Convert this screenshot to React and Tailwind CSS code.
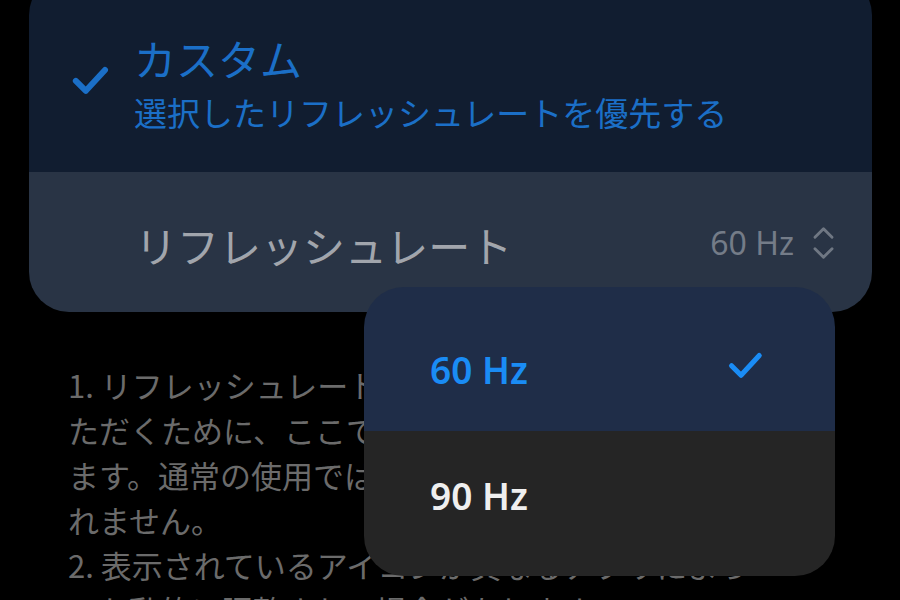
import React from "react";

const jp = { fontFamily: '"Noto Sans CJK JP", "Noto Sans", sans-serif' };
const latin = { fontFamily: '"Noto Sans", "Noto Sans CJK JP", sans-serif' };

function Check({ className, w = 3.2 }) {
  return (
    <svg viewBox="0 0 24 24" className={className} fill="none" stroke="currentColor" strokeWidth={w} strokeLinecap="round" strokeLinejoin="round">
      <path d="M3.5 12.5 L9.5 18.5 L21 6" />
    </svg>
  );
}

export default function App() {
  return (
    <div className="relative w-[900px] h-[600px] overflow-hidden bg-black" style={jp}>
      <div className="ml-[29px] mt-[-25px] w-[843px] rounded-[40px] overflow-hidden">
        <div className="bg-[#111d30] pt-[61px] pb-[38px] pl-[41px] flex items-start">
          <Check className="w-[40px] h-[40px] mt-[24px] text-[#1b6fc7]" w={3.6} />
          <div className="ml-[24px] flex flex-col gap-[10px]">
            <div className="text-[42px] leading-[44px] text-[#1b6fc7]">カスタム</div>
            <div className="text-[33px] leading-[44px] text-[#1b6fc7] whitespace-nowrap">選択したリフレッシュレートを優先する</div>
          </div>
        </div>
        <div className="bg-[#293445] h-[140px] pl-[106px] pr-[37px] flex items-center">
          <div className="text-[42px] leading-none text-[#a1a5ac] mt-[6px]">リフレッシュレート</div>
          <div className="ml-auto flex items-center gap-[18px] mt-[2px]">
            <span className="text-[32px] leading-none text-[#747c88]" style={latin}>60 Hz</span>
            <svg viewBox="0 0 24 40" className="w-[23px] h-[38px] text-[#6f7783]" fill="none" stroke="currentColor" strokeWidth="3" strokeLinecap="round" strokeLinejoin="round">
              <path d="M3 14 L12 5 L21 14" />
              <path d="M3 26 L12 35 L21 26" />
            </svg>
          </div>
        </div>
      </div>

      <div className="ml-[68px] mt-[50px] text-[31px] leading-[45px] text-[#6b6b6b] whitespace-nowrap">
        <div>1. リフレッシュレートの違いを体験してい</div>
        <div>ただくために、ここで手動で設定を変更でき</div>
        <div>ます。通常の使用では、この設定は必要ないかも</div>
        <div>れません。</div>
        <div>2. 表示されているアイコンが異なるアプリによっ</div>
        <div>ても動的に調整されて場合があります。</div>
      </div>

      <div className="absolute left-[364px] top-[287px] w-[471px] h-[289px] rounded-[40px] overflow-hidden flex flex-col">
        <div className="h-[144px] bg-[#1f2d48] pl-[66px] pr-[71px] flex items-center pt-[20px]">
          <span className="text-[37px] leading-none font-semibold text-[#1a8cf5]" style={latin}>60 Hz</span>
          <Check className="ml-auto w-[38px] h-[38px] text-[#1a8cf5] mb-[8px]" />
        </div>
        <div className="flex-1 bg-[#252525] pl-[66px] flex items-center pb-[16px]">
          <span className="text-[37px] leading-none font-semibold text-[#efefef]" style={latin}>90 Hz</span>
        </div>
      </div>
    </div>
  );
}
